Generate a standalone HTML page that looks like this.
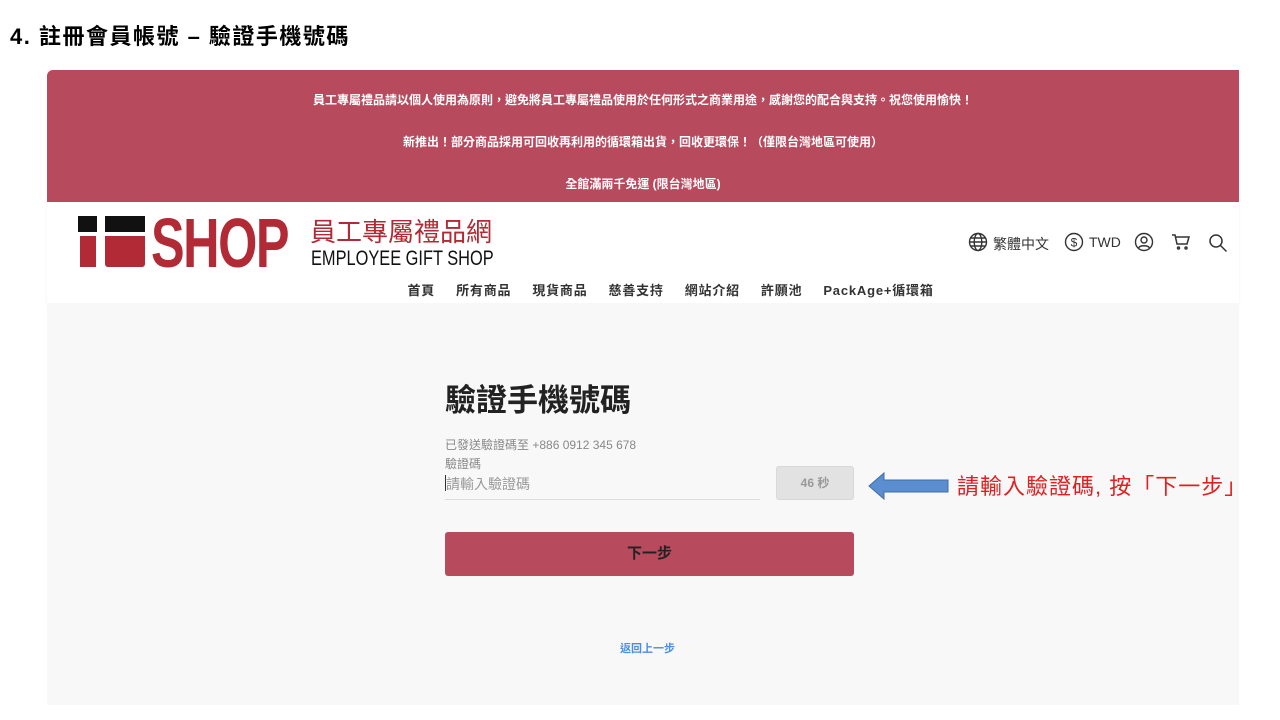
<!DOCTYPE html>
<html><head><meta charset="utf-8"><style>
*{margin:0;padding:0;box-sizing:border-box}
body{width:1280px;height:720px;background:#fff;font-family:"Liberation Sans","Noto Sans CJK TC",sans-serif;position:relative;overflow:hidden}
.abs{position:absolute}
.t{color:#fff;font-size:12px;font-weight:bold;text-align:center;width:1192px;left:47px}
.nav span{margin:0 10.5px}
</style></head><body>
<div class="abs" style="left:10px;top:19px;font-size:22px;font-weight:bold;color:#000;letter-spacing:1.5px">4. 註冊會員帳號 – 驗證手機號碼</div>
<div class="abs" style="left:47px;top:70px;width:1192px;height:132px;background:#b84a5e;border-radius:6px 0 0 0"></div>
<div class="abs t" style="top:91px">員工專屬禮品請以個人使用為原則，避免將員工專屬禮品使用於任何形式之商業用途，感謝您的配合與支持。祝您使用愉快！</div>
<div class="abs t" style="top:133px">新推出！部分商品採用可回收再利用的循環箱出貨，回收更環保！（僅限台灣地區可使用）</div>
<div class="abs t" style="top:175px">全館滿兩千免運 (限台灣地區)</div>
<div class="abs" style="left:47px;top:202px;width:1192px;height:101px;background:#fff;box-shadow:0 2px 3px rgba(0,0,0,.06)"></div>
<div class="abs" style="left:78px;top:216px;width:19px;height:16px;background:#111"></div>
<div class="abs" style="left:80px;top:236px;width:16px;height:31px;background:#b12a35"></div>
<div class="abs" style="left:105px;top:216px;width:40px;height:16px;background:#111"></div>
<div class="abs" style="left:105px;top:236px;width:40px;height:31px;background:#b12a35;border-radius:0 0 3px 3px"></div>
<div class="abs" style="left:151px;top:203px;font-weight:bold;font-size:70px;line-height:80px;color:#b12a35;letter-spacing:-2px;transform:scaleX(.72);transform-origin:left">SHOP</div>
<div class="abs" style="left:310px;top:212px;font-size:26px;color:#b12a35">員工專屬禮品網</div>
<div class="abs" style="left:311px;top:247px;font-size:21px;color:#111;transform:scaleX(.78);transform-origin:left;white-space:nowrap">EMPLOYEE GIFT SHOP</div>
<svg class="abs" style="left:968px;top:232px" width="20" height="20" viewBox="0 0 20 20" fill="none" stroke="#333" stroke-width="1.4"><circle cx="10" cy="10" r="8.5"/><ellipse cx="10" cy="10" rx="3.8" ry="8.5"/><path d="M1.5 10h17M3 6h14M3 14h14"/></svg>
<div class="abs" style="left:993px;top:234px;font-size:14px;color:#333">繁體中文</div>
<svg class="abs" style="left:1064px;top:232px" width="20" height="20" viewBox="0 0 20 20" fill="none" stroke="#333" stroke-width="1.4"><circle cx="10" cy="10" r="8.5"/><text x="10" y="14.5" font-size="12" text-anchor="middle" fill="#333" stroke="none" font-family="Liberation Sans">$</text></svg>
<div class="abs" style="left:1089px;top:234px;font-size:14px;color:#333">TWD</div>
<svg class="abs" style="left:1134px;top:232px" width="20" height="20" viewBox="0 0 20 20" fill="none" stroke="#333" stroke-width="1.4"><circle cx="10" cy="10" r="8.5"/><circle cx="10" cy="8" r="3"/><path d="M4.5 16c1.5-3 9.5-3 11 0"/></svg>
<svg class="abs" style="left:1171px;top:233px" width="20" height="18" viewBox="0 0 20 18" fill="none" stroke="#333" stroke-width="1.5"><path d="M1 2h3l2 9h10l2-7H5"/><circle cx="7.5" cy="15" r="1"/><circle cx="15" cy="15" r="1"/></svg>
<svg class="abs" style="left:1208px;top:233px" width="20" height="20" viewBox="0 0 20 20" fill="none" stroke="#333" stroke-width="1.5"><circle cx="8" cy="8" r="6"/><path d="M12.5 12.5l6 6"/></svg>
<div class="abs nav" style="left:397px;top:280px;font-size:13px;font-weight:bold;color:#333;letter-spacing:0.8px;white-space:nowrap"><span>首頁</span><span>所有商品</span><span>現貨商品</span><span>慈善支持</span><span>網站介紹</span><span>許願池</span><span>PackAge+循環箱</span></div>
<div class="abs" style="left:47px;top:303px;width:1192px;height:402px;background:#f8f8f8"></div>
<div class="abs" style="left:445px;top:375px;font-size:31px;font-weight:bold;color:#222">驗證手機號碼</div>
<div class="abs" style="left:445px;top:436px;font-size:12px;color:#888">已發送驗證碼至 +886 0912 345 678</div>
<div class="abs" style="left:445px;top:455px;font-size:12px;color:#888">驗證碼</div>
<div class="abs" style="left:445px;top:475px;width:1px;height:16px;background:#333"></div>
<div class="abs" style="left:446px;top:474px;font-size:14px;color:#999">請輸入驗證碼</div>
<div class="abs" style="left:445px;top:499px;width:315px;height:1px;background:#ddd"></div>
<div class="abs" style="left:776px;top:466px;width:78px;height:34px;background:#e2e2e2;border:1px solid #d8d8d8;border-radius:3px;font-size:12px;font-weight:bold;color:#999;text-align:center;line-height:32px">46 秒</div>
<div class="abs" style="left:445px;top:532px;width:409px;height:44px;background:#b84a5e;border-radius:3px;font-size:15px;font-weight:bold;color:#222;text-align:center;line-height:44px">下一步</div>
<div class="abs" style="left:620px;top:640px;font-size:11px;font-weight:bold;color:#4a8ee0">返回上一步</div>
<svg class="abs" style="left:868px;top:471px" width="82" height="30" viewBox="0 0 82 30"><path d="M1 15L16 2v7h64v12H16v7z" fill="#5b8ed0" stroke="#3f6fa8" stroke-width="1"/></svg>
<div class="abs" style="left:957px;top:469px;font-size:22px;color:#e02020;white-space:nowrap;letter-spacing:1px">請輸入驗證碼, 按「下一步」</div>
</body></html>
